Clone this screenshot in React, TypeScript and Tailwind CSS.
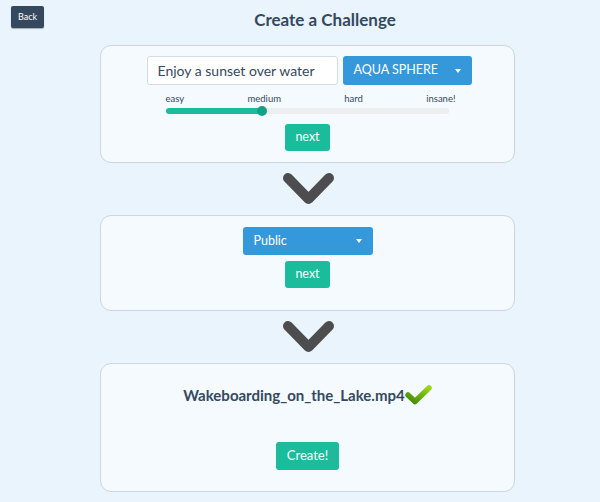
import React, { useState } from 'react';

const font = { fontFamily: 'Lato, "Open Sans", sans-serif' };

function Chevron() {
  return (
    <div className="flex justify-center py-[9px] pl-[1px]">
      <svg width="53" height="34" viewBox="0 0 53 34">
        <path
          d="M6 6 L26.5 27 L47 6"
          fill="none"
          stroke="#4d4d4f"
          strokeWidth="10"
          strokeLinecap="round"
          strokeLinejoin="round"
        />
      </svg>
    </div>
  );
}

function Caret() {
  return (
    <svg width="6" height="4" viewBox="0 0 6 4" className="shrink-0">
      <path d="M0 0 H6 L3 4 Z" fill="#ffffff" />
    </svg>
  );
}

function Check() {
  return (
    <svg width="27" height="22" viewBox="0 0 27 22">
      <defs>
        <linearGradient id="chk" x1="1" y1="0" x2="0" y2="1">
          <stop offset="0" stopColor="#9ad61a" />
          <stop offset="1" stopColor="#3f8a05" />
        </linearGradient>
      </defs>
      <path
        d="M3 11 L10 17.5 L24 4"
        fill="none"
        stroke="url(#chk)"
        strokeWidth="5.5"
        strokeLinecap="round"
        strokeLinejoin="round"
      />
    </svg>
  );
}

function NextButton({ label = 'next' }: { label?: string }) {
  return (
    <button className="h-[27px] px-[10px] rounded-[3px] bg-[#1abc9c] text-white text-[12.5px] leading-none">
      {label}
    </button>
  );
}

export default function App() {
  const [goal, setGoal] = useState('Enjoy a sunset over water');
  const levels = ['easy', 'medium', 'hard', 'insane!'];

  return (
    <div className="w-[600px] h-[502px] bg-[#eaf4fd] text-[#34495e] relative" style={font}>
      {/* Back */}
      <button className="absolute left-[11px] top-[6px] w-[33px] h-[22px] rounded-[2px] bg-[#34495e] text-white text-[9px] shadow-[0_1px_1px_rgba(0,0,0,0.3)]">
        Back
      </button>

      <div className="pl-[50px] pt-[9px] text-center">
        <h1 className="text-[17px] font-bold leading-[22px] text-[#34495e]">Create a Challenge</h1>
      </div>

      <div className="ml-[100px] w-[415px] mt-[14px]">
        {/* Step 1 */}
        <div className="h-[118px] rounded-[11px] border border-[#cdd6de] bg-[#f5faff] flex flex-col items-center pt-[10px]">
          <div className="flex gap-[5px] pl-[3px]">
            <input
              value={goal}
              onChange={(e) => setGoal(e.target.value)}
              className="w-[191px] h-[29px] rounded-[3px] border border-[#d5dbe0] bg-white pl-[10px] text-[14px] text-[#34495e] outline-none"
            />
            <div className="w-[129px] h-[29px] rounded-[3px] bg-[#3498db] flex items-center justify-between pl-[11px] pr-[11px] text-white text-[12.5px]">
              <span>AQUA SPHERE</span>
              <Caret />
            </div>
          </div>
          <div className="w-[290px] mt-[8px] pl-[6px] box-content">
            <div className="flex justify-between text-[9.5px] leading-[12px] text-[#34495e]">
              {levels.map((l) => (
                <span key={l}>{l}</span>
              ))}
            </div>
            <div className="relative w-[283px] h-[6px] mt-[3px] rounded-full bg-[#ecefef]">
              <div className="h-full w-[34%] rounded-full bg-[#1abc9c]" />
              <div className="absolute left-[34%] top-1/2 -translate-x-1/2 -translate-y-1/2 w-[10px] h-[10px] rounded-full bg-[#16a085]" />
            </div>
          </div>
          <div className="mt-[9px]">
            <NextButton />
          </div>
        </div>

        <Chevron />

        {/* Step 2 */}
        <div className="h-[96px] rounded-[11px] border border-[#cdd6de] bg-[#f5faff] flex flex-col items-center pt-[11px]">
          <div className="w-[130px] h-[28px] rounded-[3px] bg-[#3498db] flex items-center justify-between pl-[11px] pr-[11px] text-white text-[12.5px]">
            <span>Public</span>
            <Caret />
          </div>
          <div className="mt-[5px]">
            <NextButton />
          </div>
        </div>

        <Chevron />

        {/* Step 3 */}
        <div className="h-[129px] rounded-[11px] border border-[#cdd6de] bg-[#f5faff] flex flex-col items-center pt-[20px]">
          <div className="flex items-center">
            <span className="text-[15px] font-bold text-[#34495e]">Wakeboarding_on_the_Lake.mp4</span>
            <Check />
          </div>
          <div className="mt-[35px]">
            <button className="h-[28px] px-[11px] rounded-[3px] bg-[#1abc9c] text-white text-[13px] leading-none">
              Create!
            </button>
          </div>
        </div>
      </div>
    </div>
  );
}
